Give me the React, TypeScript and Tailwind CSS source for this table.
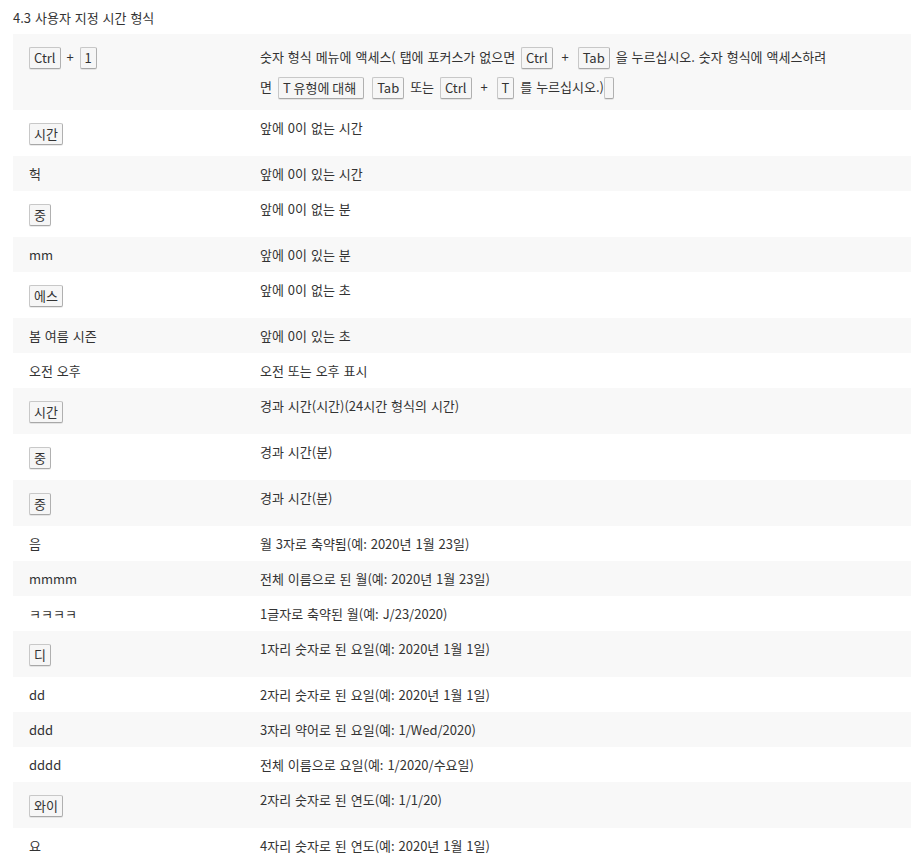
import React from 'react';

type Row = {
  key: string;
  isKey?: boolean;
  desc: string;
};

const ROWS: Row[] = [
  { key: '시간', isKey: true, desc: '앞에 0이 없는 시간' },
  { key: '헉', desc: '앞에 0이 있는 시간' },
  { key: '중', isKey: true, desc: '앞에 0이 없는 분' },
  { key: 'mm', desc: '앞에 0이 있는 분' },
  { key: '에스', isKey: true, desc: '앞에 0이 없는 초' },
  { key: '봄 여름 시즌', desc: '앞에 0이 있는 초' },
  { key: '오전 오후', desc: '오전 또는 오후 표시' },
  { key: '시간', isKey: true, desc: '경과 시간(시간)(24시간 형식의 시간)' },
  { key: '중', isKey: true, desc: '경과 시간(분)' },
  { key: '중', isKey: true, desc: '경과 시간(분)' },
  { key: '음', desc: '월 3자로 축약됨(예: 2020년 1월 23일)' },
  { key: 'mmmm', desc: '전체 이름으로 된 월(예: 2020년 1월 23일)' },
  { key: 'ㅋㅋㅋㅋ', desc: '1글자로 축약된 월(예: J/23/2020)' },
  { key: '디', isKey: true, desc: '1자리 숫자로 된 요일(예: 2020년 1월 1일)' },
  { key: 'dd', desc: '2자리 숫자로 된 요일(예: 2020년 1월 1일)' },
  { key: 'ddd', desc: '3자리 약어로 된 요일(예: 1/Wed/2020)' },
  { key: 'dddd', desc: '전체 이름으로 요일(예: 1/2020/수요일)' },
  { key: '와이', isKey: true, desc: '2자리 숫자로 된 연도(예: 1/1/20)' },
  { key: '요', desc: '4자리 숫자로 된 연도(예: 2020년 1월 1일)' },
];

function Kbd({ children, spaced }: { children?: React.ReactNode; spaced?: boolean }) {
  return (
    <kbd
      className={
        spaced
          ? 'inline-block align-middle mx-[2px] h-[22px] min-w-[9px] px-[4px] leading-[20px] text-[13px] text-[#333] bg-[#f6f6f6] border border-[#c8c8c8] border-b-[#a8a8a8] border-r-[#b0b0b0] rounded-[2px] shadow-[0_1px_0_rgba(0,0,0,0.08)] [font-family:inherit] [word-spacing:0]'
          : 'inline-block align-middle h-[22px] min-w-[9px] px-[4px] leading-[20px] text-[13px] text-[#333] bg-[#f6f6f6] border border-[#c8c8c8] border-b-[#a8a8a8] border-r-[#b0b0b0] rounded-[2px] shadow-[0_1px_0_rgba(0,0,0,0.08)] [font-family:inherit] [word-spacing:0]'
      }
    >
      {children}
    </kbd>
  );
}

export default function App() {
  return (
    <div
      className="w-[916px] h-[859px] overflow-hidden bg-white text-[#333] text-[13px] pl-[13px] pr-[5px] [word-spacing:1px]"
      style={{ fontFamily: '"Noto Sans CJK KR", "Noto Sans", sans-serif' }}
    >
      <h3 className="pt-[8px] leading-[19px] mb-[7px] font-normal">4.3 사용자 지정 시간 형식</h3>

      <table className="w-[898px] table-fixed border-collapse">
        <colgroup>
          <col className="w-[231px]" />
          <col />
        </colgroup>
        <tbody>
          <tr className="bg-[#f8f8f8]">
            <td className="align-top pl-4 py-2 leading-[30px] whitespace-nowrap">
              <Kbd>Ctrl</Kbd> <span className="mx-[2px]">+</span> <Kbd>1</Kbd>
            </td>
            <td className="align-top pl-4 pr-2 py-2 leading-[30px]">
              숫자 형식 메뉴에 액세스( 탭에 포커스가 없으면 <Kbd spaced>Ctrl</Kbd>{' '}
              <span className="mx-[3px]">+</span> <Kbd spaced>Tab</Kbd> 을 누르십시오. 숫자 형식에 액세스하려
              <br />
              면 <Kbd spaced>T 유형에 대해&nbsp;</Kbd> <Kbd spaced>Tab</Kbd> 또는 <Kbd spaced>Ctrl</Kbd>{' '}
              <span className="mx-[3px]">+</span> <Kbd spaced>T</Kbd> 를 누르십시오.)
              <Kbd />
            </td>
          </tr>
          {ROWS.map((row, i) => (
            <tr key={i} className={i % 2 === 0 ? 'bg-white' : 'bg-[#f8f8f8]'}>
              <td
                className={
                  row.isKey
                    ? 'align-top pl-4 py-2 leading-[30px]'
                    : 'align-top pl-4 py-2 leading-[19px]'
                }
              >
                {row.isKey ? <Kbd>{row.key}</Kbd> : row.key}
              </td>
              <td className="align-top pl-4 pr-2 py-2 leading-[19px]">{row.desc}</td>
            </tr>
          ))}
        </tbody>
      </table>
    </div>
  );
}
